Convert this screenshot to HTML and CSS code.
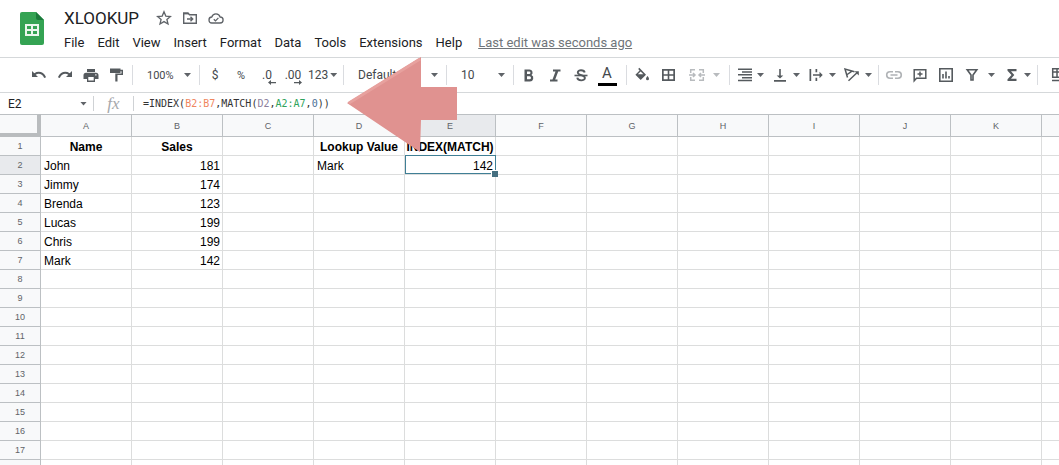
FILE: index.html
```html
<!DOCTYPE html>
<html lang="en">
<head>
<meta charset="utf-8">
<meta name="viewport" content="width=device-width, initial-scale=1">
<title>XLOOKUP</title>
<link rel="stylesheet" href="styles.css">
</head>
<body>
<div class="app">
  <header class="header">
    <svg class="logo" width="24" height="33" viewBox="0 0 24 33" aria-hidden="true">
      <path fill="#34a353" d="M2 0h14l8 8v23a2 2 0 0 1-2 2H2a2 2 0 0 1-2-2V2a2 2 0 0 1 2-2z"/>
      <path fill="#1b7a3b" d="M16 0l8 8h-6a2 2 0 0 1-2-2z"/>
      <path fill="#e9f6ec" fill-rule="evenodd" d="M5 12h14v12H5zM7 14v3h4v-3zM13 14v3h4v-3zM7 19v3h4v-3zM13 19v3h4v-3z"/>
    </svg>
    <div class="head-main">
      <div class="title-row">
        <h1 class="title">XLOOKUP</h1>
        <button class="title-btn" aria-label="Star">
          <svg width="16" height="16" viewBox="0 0 16 16" fill="none" stroke="#5f6368" stroke-width="1.3"><path d="M8 1.8l1.8 4.3 4.6.4-3.500 3 1.100 4.500L8 11.600 4 14l1.100-4.500-3.500-3 4.600-.4z"/></svg>
        </button>
        <button class="title-btn" aria-label="Move">
          <svg width="16" height="16" viewBox="0 0 16 16" fill="none" stroke="#5f6368" stroke-width="1.400"><path d="M1.700 3h4.300l1.500 1.700h6.800v8.600H1.700zM5 9h5.500M8.500 6.800L10.700 9l-2.200 2.200"/><path d="M1.700 3.700h5"/></svg>
        </button>
        <button class="title-btn" aria-label="See document status">
          <svg width="16" height="16" viewBox="0 0 16 16" fill="none" stroke="#5f6368" stroke-width="1.300"><path d="M4.200 13a3 3 0 0 1-.4-6A4.300 4.300 0 0 1 12.100 7a3 3 0 0 1 0 6z"/><path d="M5.800 9.200l1.700 1.700 2.900-3"/></svg>
        </button>
      </div>
      <nav class="menu" aria-label="Menu">
        <button>File</button><button>Edit</button><button>View</button><button>Insert</button><button>Format</button><button>Data</button><button>Tools</button><button>Extensions</button><button>Help</button>
        <a class="last-edit" href="#history">Last edit was seconds ago</a>
      </nav>
    </div>
  </header>

  <div class="toolbar" role="toolbar" aria-label="Formatting">
    <div class="group first">
      <button class="tool" aria-label="Undo"><svg viewBox="0 0 18 18"><path d="M2 5v6h6L5.700 8.800C8.500 6.800 12.300 7.800 14.200 12l1.900-.7C13.700 5.800 8.400 4.500 4.300 7.300z"/></svg></button>
      <button class="tool" aria-label="Redo"><svg viewBox="0 0 18 18"><path d="M16 5v6h-6l2.300-2.200C9.500 6.800 5.700 7.800 3.800 12l-1.900-.7C4.300 5.800 9.600 4.500 13.700 7.300z"/></svg></button>
      <button class="tool" aria-label="Print"><svg viewBox="0 0 18 18"><path fill-rule="evenodd" d="M5 3h8v3H5zM4 6.700h10a2.500 2.500 0 0 1 2.500 2.500V13H13v3H5v-3H1.500V9.200A2.500 2.500 0 0 1 4 6.700zM6.300 11v3.500h5.400V11zM13.200 8.300v1.300h1.300V8.300z"/></svg></button>
      <button class="tool" aria-label="Paint format"><svg viewBox="0 0 18 18"><path d="M2 2.500h10.500v1.200H15V9H9.500v6.500H7.300V7.500h6.200V5.200h-1V7H2z"/></svg></button>
    </div>
    <span class="sep"></span>
    <label class="drop zoom"><select aria-label="Zoom"><option>100%</option></select></label>
    <span class="sep"></span>
    <button class="tool" aria-label="Format as currency">$</button>
    <button class="tool pct" aria-label="Format as percent">%</button>
    <button class="tool dec" aria-label="Decrease decimal places"><span>.0</span><svg class="mini" viewBox="0 0 8 5"><path d="M3 0v2h5v1.200H3V5L0 2.500z"/></svg></button>
    <button class="tool dec" aria-label="Increase decimal places"><span>.00</span><svg class="mini" viewBox="0 0 8 5"><path d="M5 0v2H0v1.200h5V5l3-2.500z"/></svg></button>
    <button class="formats" aria-label="More formats">123<i class="caret"></i></button>
    <span class="sep"></span>
    <label class="drop font"><select aria-label="Font"><option>Default</option></select></label>
    <span class="sep"></span>
    <label class="drop size"><select aria-label="Font size"><option>10</option></select></label>
    <span class="sep"></span>
    <div class="group styles">
      <button class="tool" aria-label="Bold"><svg viewBox="0 0 18 18"><path fill-rule="evenodd" d="M4.500 3.500h5a3.200 3.200 0 0 1 2 5.600 3.400 3.400 0 0 1-1.700 6.400H4.500zM7 5.600v2.500h2.200a1.250 1.250 0 0 0 0-2.500zM7 10.300v3h2.500a1.500 1.500 0 0 0 0-3z"/></svg></button>
      <button class="tool" aria-label="Italic"><svg viewBox="0 0 18 18"><path d="M7 3.500h7.500v2H12.200L9.200 13.500h2.300v2H4v-2h2.500l3-8H7z"/></svg></button>
      <button class="tool" aria-label="Strikethrough"><svg viewBox="0 0 18 18" fill="none" stroke="#555a5e"><path stroke-width="1.900" d="M12.700 6.500C12.200 3.600 5.800 3.400 5.800 6.500c0 3.300 7.100 2 7.100 5.400 0 3.300-7.300 3.300-7.600-.2"/><path stroke-width="1.600" d="M2.500 9.500h13"/></svg></button>
      <button class="tool color" aria-label="Text color"><span>A</span></button>
    </div>
    <span class="sep"></span>
    <button class="tool" aria-label="Fill color"><svg viewBox="0 0 18 18"><path fill-rule="evenodd" d="M6.300 1.800L13 8.700 7.700 14 2.400 8.700 6.600 4.500 5.200 2.900zM7.600 5.500L4.800 8.300h5.600z"/><path d="M14.500 10s1.500 1.700 1.500 2.700a1.500 1.500 0 0 1-3 0c0-1 1.500-2.700 1.500-2.700z"/></svg></button>
    <button class="tool" aria-label="Borders"><svg viewBox="0 0 18 18"><path fill-rule="evenodd" d="M3 3h13v12H3zM4.700 4.700v3.500h4V4.700zM10.300 4.700v3.500h4V4.700zM4.700 9.800v3.500h4V9.800zM10.300 9.800v3.500h4V9.800z"/></svg></button>
    <button class="split wide merge" aria-label="Merge cells" disabled><svg viewBox="0 0 18 18" fill="none" stroke="#b8bbbe" stroke-width="1.500"><path d="M7 3.700H2.700V7M11 3.700h4.300V7M2.700 11v3.300H7M15.300 11v3.300H11M1 9h6M17 9h-6M5 7l2 2-2 2M13 7l-2 2 2 2"/></svg><i class="caret"></i></button>
    <span class="sep"></span>
    <button class="split" aria-label="Horizontal align"><svg viewBox="0 0 18 18"><path d="M2 2.500h14V4H2zM6 5.300h10v1.500H6zM2 8.100h14v1.500H2zM6 10.900h10v1.500H6zM2 13.700h14v1.500H2z"/></svg><i class="caret"></i></button>
    <button class="split" aria-label="Vertical align"><svg viewBox="0 0 18 18"><path d="M7.200 3h1.600v6.500h2.500L8 12.600 4.700 9.500h2.500zM2 14h12v1.700H2z"/></svg><i class="caret"></i></button>
    <button class="split" aria-label="Text wrapping"><svg viewBox="0 0 18 18"><path d="M1.500 3h1.700v12H1.500zM7.500 3h1.700v3.200H7.500zM7.500 11.800h1.700V15H7.500zM5 8.200h6.500V5.800L14.700 9l-3.200 3.200V9.800H5z"/></svg><i class="caret"></i></button>
    <button class="split" aria-label="Text rotation"><svg viewBox="0 0 18 18" fill="none" stroke="#555a5e" stroke-width="1.500"><path d="M3.500 11.500L1 3l9.500 2.800M8 5.200L3.200 8.500M4.500 14.700L13 6.800"/><path fill="#555a5e" stroke="none" d="M10.500 5.300h4.300v4.300z"/></svg><i class="caret"></i></button>
    <span class="sep"></span>
    <button class="tool" aria-label="Insert link" disabled><svg viewBox="0 0 18 18" fill="none" stroke="#b0b3b6" stroke-width="1.600"><path d="M8 5.700H5a3.300 3.300 0 0 0 0 6.600h3M10 5.700h3a3.300 3.300 0 0 1 0 6.600h-3M5.500 9h7"/></svg></button>
    <button class="tool" aria-label="Insert comment"><svg viewBox="0 0 18 18" fill="none" stroke="#555a5e" stroke-width="1.500"><path d="M3.200 3.700h11.600v8.600H5.500l-2.300 2.500zM9 5.500v5M6.500 8h5"/></svg></button>
    <button class="tool" aria-label="Insert chart"><svg viewBox="0 0 18 18" fill="none" stroke="#555a5e" stroke-width="1.600"><path d="M2.800 2.800h12.400v12.400H2.800zM6 8v4.500M9 5.500v7M12 10v2.500"/></svg></button>
    <button class="split wide-gap" aria-label="Create a filter"><svg viewBox="0 0 18 18" fill="none" stroke="#555a5e" stroke-width="1.600"><path d="M4.200 3.800h9.600L10 9v5H8V9z"/></svg><i class="caret"></i></button>
    <button class="split" aria-label="Functions"><svg viewBox="0 0 18 18"><path d="M4.500 3h9v2.300H8L11.300 9 8 12.700h5.500V15h-9v-1.700L8.500 9 4.500 4.700z"/></svg><i class="caret"></i></button>
    <span class="sep"></span>
    <button class="tool last" aria-label="Filter views"><svg viewBox="0 0 18 18" fill="none" stroke="#555a5e" stroke-width="1.500"><path d="M2.700 2.700h13v8.600h-13zM2.700 6h13M7 2.700v8.600M2 14.500h14"/></svg></button>
  </div>

  <div class="formula-bar">
    <div class="name-box"><input aria-label="Name box" value="E2"><i class="caret"></i></div>
    <span class="bar-sep"></span>
    <span class="fx">fx</span>
    <span class="bar-sep"></span>
    <div class="formula" role="textbox" aria-label="Formula" contenteditable="true" spellcheck="false">=INDEX(<span class="ref-a">B2:B7</span>,MATCH(<span class="ref-b">D2</span>,<span class="ref-c">A2:A7</span>,<span class="num">0</span>))</div>
  </div>

  <main class="sheet">
    <table class="grid">
      <colgroup><col class="col-num"><col span="12" class="col"></colgroup>
      <thead>
        <tr><th class="corner"></th><th>A</th><th>B</th><th>C</th><th>D</th><th class="active">E</th><th>F</th><th>G</th><th>H</th><th>I</th><th>J</th><th>K</th><th></th></tr>
      </thead>
      <tbody>
        <tr><th>1</th><td class="h">Name</td><td class="h">Sales</td><td></td><td class="h">Lookup Value</td><td class="h">INDEX(MATCH)</td><td></td><td></td><td></td><td></td><td></td><td></td><td></td></tr>
        <tr><th class="active">2</th><td>John</td><td class="n">181</td><td></td><td>Mark</td><td class="n selected">142</td><td></td><td></td><td></td><td></td><td></td><td></td><td></td></tr>
        <tr><th>3</th><td>Jimmy</td><td class="n">174</td><td></td><td></td><td></td><td></td><td></td><td></td><td></td><td></td><td></td><td></td></tr>
        <tr><th>4</th><td>Brenda</td><td class="n">123</td><td></td><td></td><td></td><td></td><td></td><td></td><td></td><td></td><td></td><td></td></tr>
        <tr><th>5</th><td>Lucas</td><td class="n">199</td><td></td><td></td><td></td><td></td><td></td><td></td><td></td><td></td><td></td><td></td></tr>
        <tr><th>6</th><td>Chris</td><td class="n">199</td><td></td><td></td><td></td><td></td><td></td><td></td><td></td><td></td><td></td><td></td></tr>
        <tr><th>7</th><td>Mark</td><td class="n">142</td><td></td><td></td><td></td><td></td><td></td><td></td><td></td><td></td><td></td><td></td></tr>
        <tr><th>8</th><td></td><td></td><td></td><td></td><td></td><td></td><td></td><td></td><td></td><td></td><td></td><td></td></tr>
        <tr><th>9</th><td></td><td></td><td></td><td></td><td></td><td></td><td></td><td></td><td></td><td></td><td></td><td></td></tr>
        <tr><th>10</th><td></td><td></td><td></td><td></td><td></td><td></td><td></td><td></td><td></td><td></td><td></td><td></td></tr>
        <tr><th>11</th><td></td><td></td><td></td><td></td><td></td><td></td><td></td><td></td><td></td><td></td><td></td><td></td></tr>
        <tr><th>12</th><td></td><td></td><td></td><td></td><td></td><td></td><td></td><td></td><td></td><td></td><td></td><td></td></tr>
        <tr><th>13</th><td></td><td></td><td></td><td></td><td></td><td></td><td></td><td></td><td></td><td></td><td></td><td></td></tr>
        <tr><th>14</th><td></td><td></td><td></td><td></td><td></td><td></td><td></td><td></td><td></td><td></td><td></td><td></td></tr>
        <tr><th>15</th><td></td><td></td><td></td><td></td><td></td><td></td><td></td><td></td><td></td><td></td><td></td><td></td></tr>
        <tr><th>16</th><td></td><td></td><td></td><td></td><td></td><td></td><td></td><td></td><td></td><td></td><td></td><td></td></tr>
        <tr><th>17</th><td></td><td></td><td></td><td></td><td></td><td></td><td></td><td></td><td></td><td></td><td></td><td></td></tr>
        <tr><th></th><td></td><td></td><td></td><td></td><td></td><td></td><td></td><td></td><td></td><td></td><td></td><td></td></tr>
      </tbody>
    </table>
  </main>

  <svg class="pointer" width="110" height="96" viewBox="0 0 110 96" aria-hidden="true">
    <path fill="#e09290" d="M0 46L74 0V30H110V63H74L73 95z"/>
    <path fill="none" stroke="#e7a19e" stroke-width="3" d="M2 46L73 2"/>
  </svg>
</div>
</body>
</html>
```
FILE: styles.css
```css
* { box-sizing: border-box; }

body {
  margin: 0;
  background: #fff;
  color: #202124;
  font-family: Roboto, "Liberation Sans", sans-serif;
  font-size: 13px;
}

button, input, select {
  margin: 0;
  padding: 0;
  border: 0;
  background: none;
  color: inherit;
  font: inherit;
}

.app {
  position: relative;
  height: 100vh;
  overflow: hidden;
  display: flex;
  flex-direction: column;
}

/* Header */
.header {
  display: flex;
  flex: none;
  gap: 20px;
  height: 58px;
  padding: 7px 20px 0;
  border-bottom: 1px solid #d5d8da;
}
.logo { flex: none; margin-top: 5px; }
.head-main { display: flex; flex-direction: column; }
.title-row { display: flex; align-items: center; gap: 10px; height: 22px; }
.title {
  margin: 0 7px 0 0;
  font-size: 17px;
  font-weight: 400;
  line-height: 22px;
}
.title-btn { display: flex; }
.menu { display: flex; gap: 13px; height: 26px; align-items: center; white-space: nowrap; }
.last-edit { margin-left: 3px; color: #70757a; }

/* Toolbar */
.toolbar {
  display: flex;
  flex: none;
  align-items: center;
  height: 35px;
  border-bottom: 1px solid #d5d8da;
  color: #44484c;
  font-size: 12px;
}
.toolbar > * { flex: none; }
.toolbar svg { width: 18px; height: 18px; flex: none; }
.toolbar svg:not([fill]) { fill: #555a5e; }
.group { display: flex; }
.first { padding-left: 26px; }
.styles { padding-right: 4px; }
.sep { width: 1px; height: 20px; margin: 0 2px; background: #dadce0; }
.tool {
  display: flex;
  align-items: center;
  justify-content: center;
  width: 26px;
  height: 26px;
}
.pct { font-size: 11px; }
.dec { position: relative; }
.toolbar .mini { position: absolute; right: 4px; bottom: 3px; width: 8px; height: 5px; }
.color span {
  width: 19px;
  border-bottom: 3px solid #000;
  font-size: 15px;
  line-height: 19px;
}
.caret {
  flex: none;
  width: 7px;
  height: 4px;
  background: #5f6368;
  clip-path: polygon(0 0, 100% 0, 50% 100%);
}
.formats { display: flex; align-items: center; gap: 2px; width: 35px; padding-left: 2px; }
.drop { position: relative; display: flex; align-items: center; height: 26px; }
.drop select { width: 100%; padding-left: 12px; appearance: none; }
.drop::after {
  content: "";
  position: absolute;
  right: 6px;
  width: 7px;
  height: 4px;
  background: #5f6368;
  clip-path: polygon(0 0, 100% 0, 50% 100%);
  pointer-events: none;
}
.zoom, .size { width: 62px; }
.zoom { font-size: 11px; }
.font { width: 98px; }
.split { display: flex; align-items: center; gap: 3px; height: 26px; padding: 0 4px; }
.wide { gap: 7px; padding: 0 7px; }
.wide-gap { gap: 7px; }
.merge .caret { background: #b8bbbe; }
.last { width: 38px; }

/* Formula bar */
.formula-bar { display: flex; flex: none; align-items: center; height: 21px; }
.name-box { display: flex; align-items: center; width: 93px; padding: 0 6px 0 8px; }
.name-box input { flex: 1; min-width: 0; font-size: 12px; }
.bar-sep { width: 1px; height: 15px; background: #cfd2d5; }
.fx {
  width: 39px;
  text-align: center;
  color: #a5a8ab;
  font: italic 17px/20px "Liberation Serif", serif;
}
.formula {
  padding-left: 9px;
  color: #333;
  font: 10px/20px "DejaVu Sans Mono", monospace;
}
.ref-a { color: #f0875f; }
.ref-b { color: #8d7f9c; }
.ref-c { color: #2fa35c; }
.num { color: #4a6f96; }

/* Grid */
.sheet { flex: 1; min-height: 0; overflow: hidden; }
.grid {
  width: 1133px;
  table-layout: fixed;
  border-collapse: separate;
  border-spacing: 0;
  font-family: "Liberation Sans", Arial, sans-serif;
  font-size: 12px;
}
.col-num { width: 41px; }
.col { width: 91px; }
.grid th {
  height: 19px;
  padding: 0;
  border: 0 solid #bcc0c3;
  border-width: 0 1px 1px 0;
  background: #f8f9fa;
  color: #5f6368;
  font-size: 9px;
  font-weight: 400;
}
.grid thead th { height: 23px; border-top-width: 1px; }
.grid .active { background: #e8eaed; }
.grid thead .corner { border-right: 4px solid #b9bcbe; border-bottom: 4px solid #b9bcbe; }
.grid td {
  height: 19px;
  padding: 2px 3px 0;
  border: 0 solid #dcdddd;
  border-width: 0 1px 1px 0;
  color: #000;
  line-height: 16px;
  white-space: nowrap;
}
.grid .h { padding: 2px 0 0; font-weight: 700; text-align: center; }
.grid .n { padding: 2px 2px 0; text-align: right; }
.selected { position: relative; }
.selected::before {
  content: "";
  position: absolute;
  inset: -1px -1px 0 0;
  border: 1px solid #3f7f95;
}
.selected::after {
  content: "";
  position: absolute;
  right: -3px;
  bottom: -3px;
  width: 6px;
  height: 6px;
  border: 1px solid #fff;
  border-width: 1px 0 0 1px;
  background: #456f80;
}

/* Arrow laid over the sheet, pointing at the formula */
.pointer { position: absolute; left: 347px; top: 57px; pointer-events: none; }
```
